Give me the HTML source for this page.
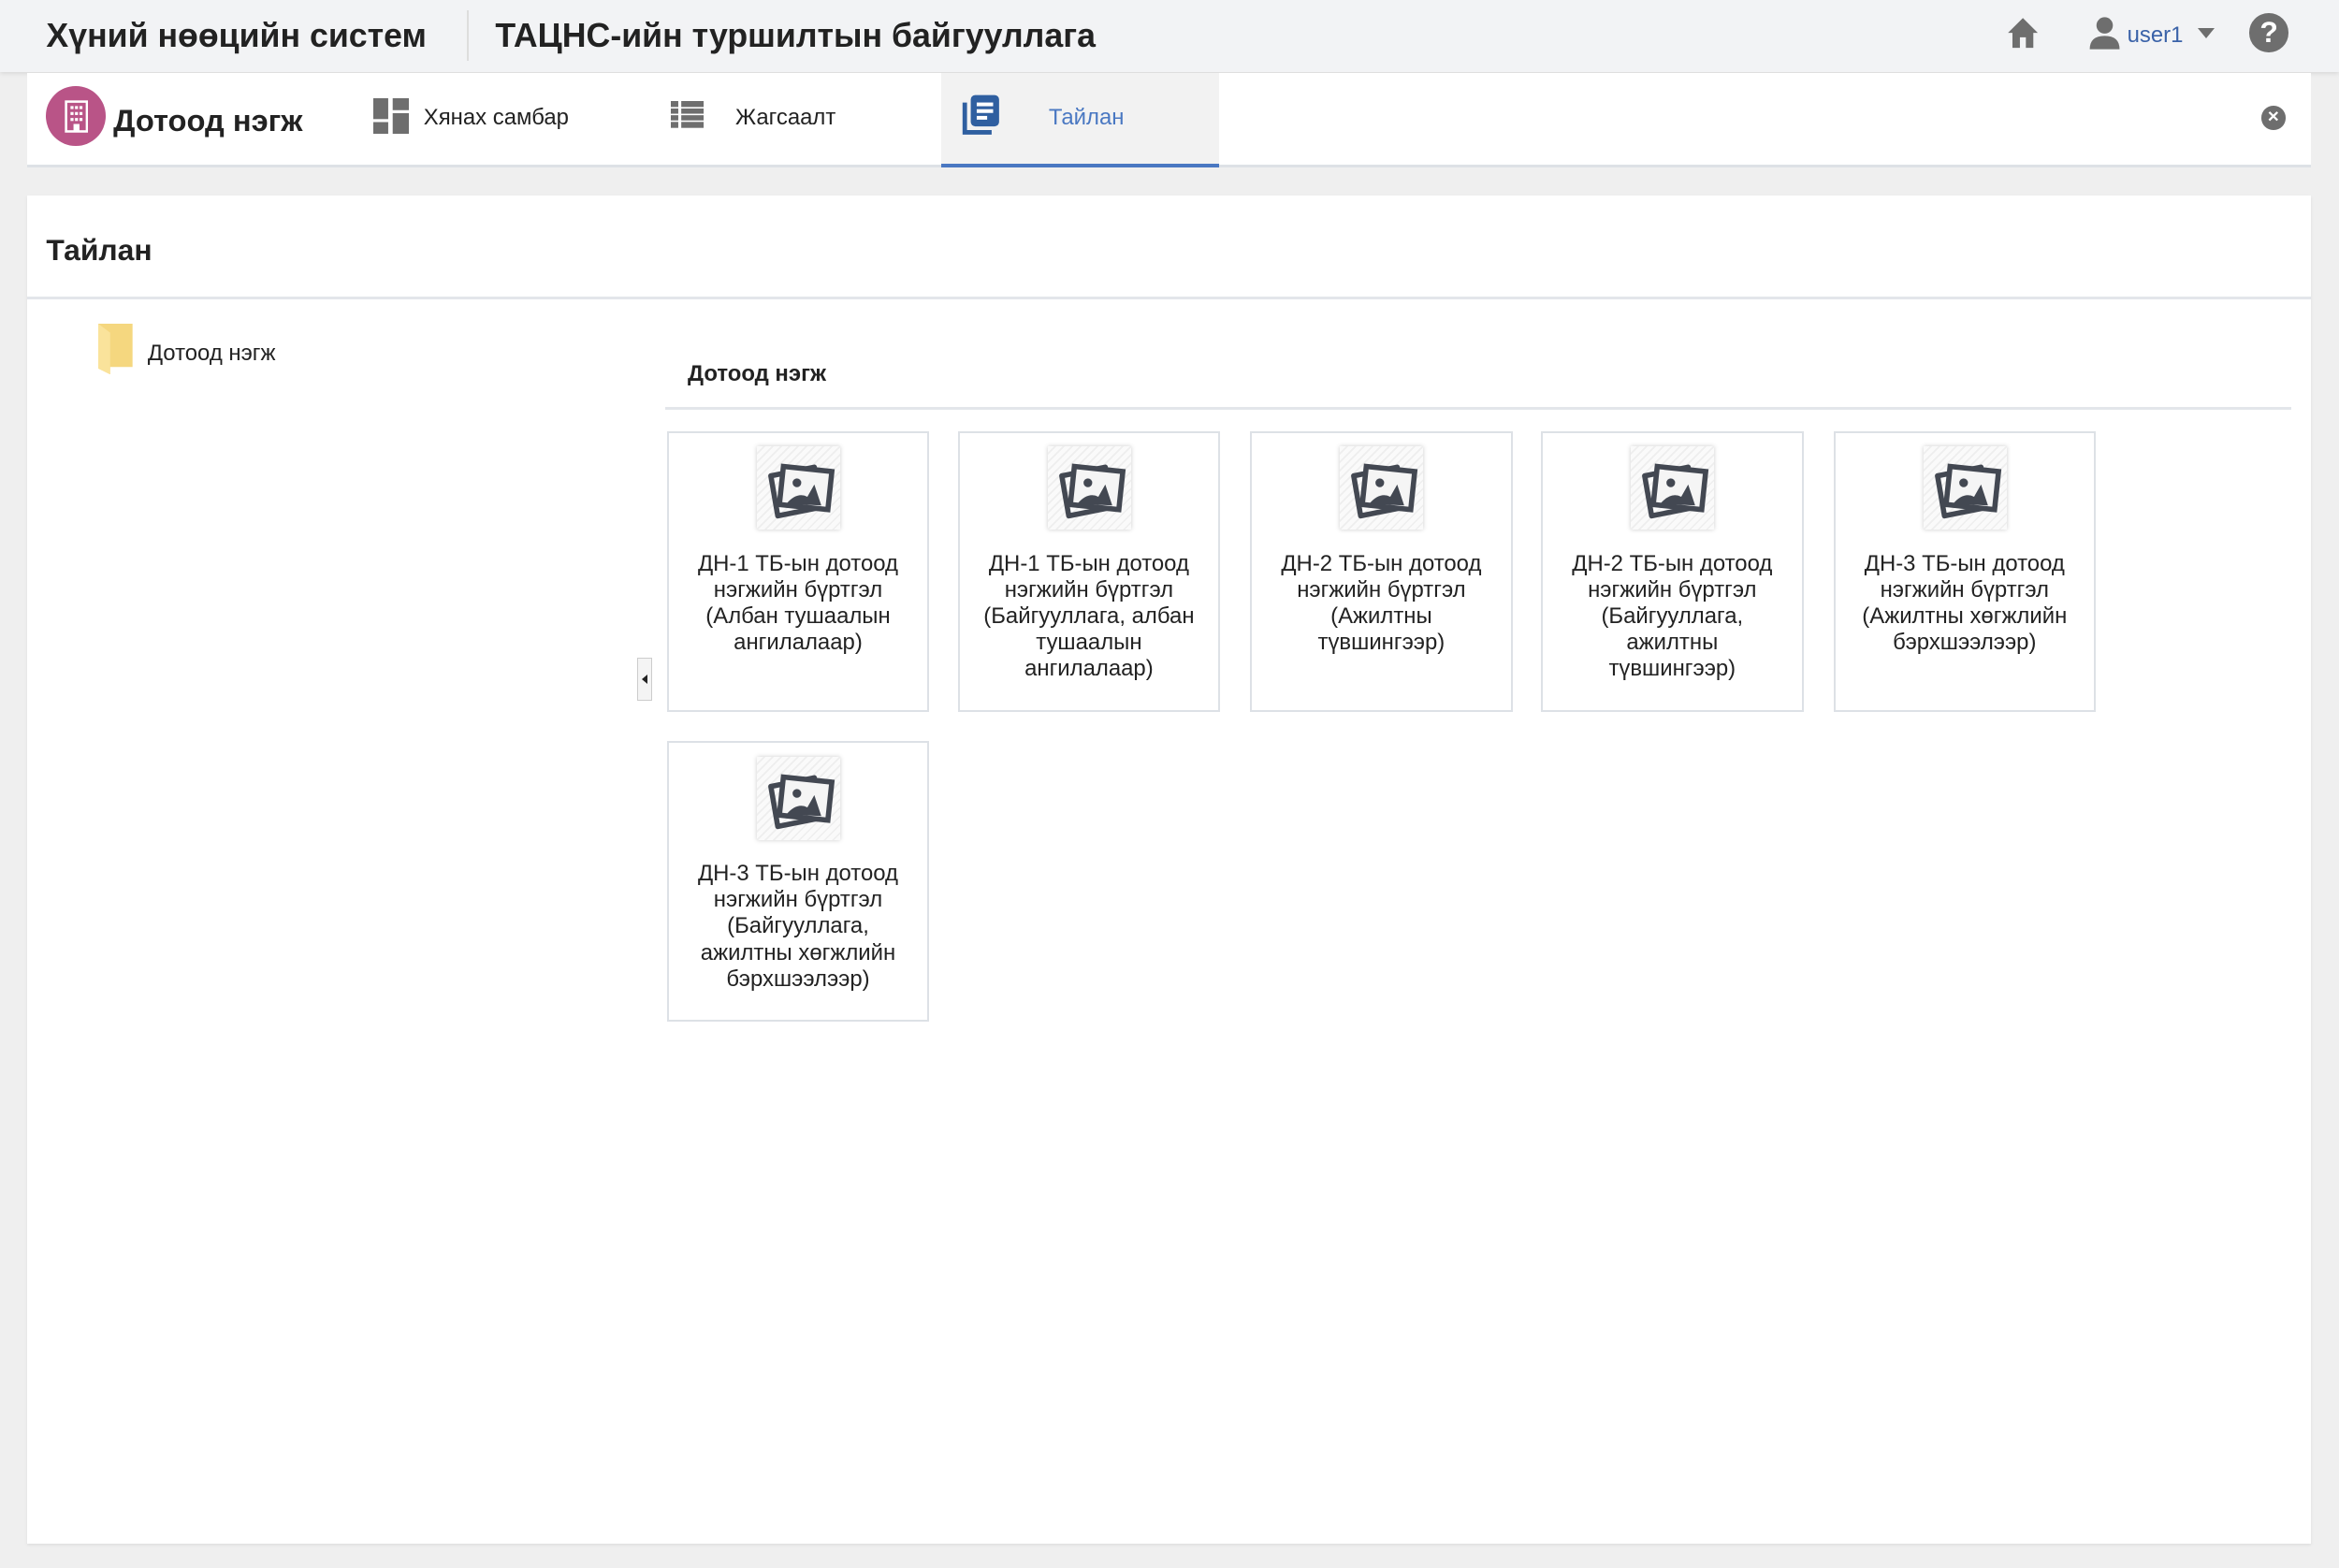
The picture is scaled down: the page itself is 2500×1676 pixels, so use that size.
<!DOCTYPE html>
<html><head><meta charset="utf-8"><style>
*{box-sizing:border-box;margin:0;padding:0}
html,body{width:2500px;height:1676px;overflow:hidden;background:#efefef;font-family:"Liberation Sans",Arial,sans-serif;color:#222}
#w{zoom:1.59439;width:1568px;height:1052px;position:relative}
.a{position:absolute}
.top{left:0;top:0;width:1568px;height:48px;background:#f2f3f5;box-shadow:0 1px 3px rgba(0,0,0,.12)}
.t1{font-weight:bold;font-size:22.4px;top:11px;white-space:nowrap;color:#222}
.tabs{left:18px;top:49px;width:1531px;height:63px;background:#fff;border-bottom:2px solid #dde1e6}
.tab{font-size:15px;top:70px;white-space:nowrap}
.card{width:176px;height:188px;border:1.5px solid #dde1e6;background:#fff;text-align:center;font-size:15px;line-height:17.6px;color:#222;padding:79px 13px 0}
.thumb{position:absolute;left:59px;top:9px;width:56px;height:56px;background:repeating-linear-gradient(135deg,#fafafa 0 3px,#eee 3px 4px);box-shadow:0 0 3px rgba(0,0,0,.2)}
</style></head><body><div id="w">
<div class="a top"></div>
<div class="a t1" style="left:31px">Хүний нөөцийн систем</div>
<div class="a" style="left:313px;top:7px;width:1px;height:34px;background:#ddd"></div>
<div class="a t1" style="left:332px">ТАЦНС-ийн туршилтын байгууллага</div>
<svg class="a" style="left:1344px;top:10px" width="24" height="24" viewBox="0 0 24 24"><path d="M12 2 L2 12 H5 V22 H10 V15 H14 V22 H19 V12 H22 Z" fill="#6e6e6e"/></svg>
<svg class="a" style="left:1400px;top:10px" width="22" height="24" viewBox="0 0 22 24"><circle cx="11" cy="7" r="5.5" fill="#6e6e6e"/><path d="M1 23 Q1 14 11 14 Q21 14 21 23Z" fill="#6e6e6e"/></svg>
<div class="a" style="left:1426px;top:15px;font-size:15px;color:#3a62a8">user1</div>
<div class="a" style="left:1473px;top:19px;width:0;height:0;border-left:6px solid transparent;border-right:6px solid transparent;border-top:7px solid #6e6e6e"></div>
<div class="a" style="left:1508px;top:9px;width:26px;height:26px;border-radius:50%;background:#6e6e6e;color:#fff;font-weight:bold;font-size:20px;text-align:center;line-height:26px">?</div>

<div class="a tabs"></div>
<div class="a" style="left:631px;top:49px;width:186px;height:63px;background:#f2f2f2;border-bottom:3px solid #4a78c2"></div>
<div class="a" style="left:31px;top:58px;width:40px;height:40px;border-radius:50%;background:#b95487"></div>
<svg class="a" style="left:43px;top:67px" width="16" height="22" viewBox="0 0 16 22"><rect x="1" y="1" width="14" height="20" fill="none" stroke="#fff" stroke-width="1.6"/><g fill="#fff"><rect x="4" y="4" width="2" height="2"/><rect x="7" y="4" width="2" height="2"/><rect x="10" y="4" width="2" height="2"/><rect x="4" y="8" width="2" height="2"/><rect x="7" y="8" width="2" height="2"/><rect x="10" y="8" width="2" height="2"/><rect x="4" y="12" width="2" height="2"/><rect x="7" y="12" width="2" height="2"/><rect x="10" y="12" width="2" height="2"/><rect x="6" y="16" width="4" height="5"/></g></svg>
<div class="a" style="left:76px;top:69px;font-size:20.5px;font-weight:bold">Дотоод нэгж</div>
<svg class="a" style="left:250px;top:66px" width="24" height="24" viewBox="0 0 24 24" fill="#6e6e6e"><rect x="0" y="0" width="10" height="14"/><rect x="0" y="16" width="10" height="8"/><rect x="13" y="0" width="11" height="8"/><rect x="13" y="10" width="11" height="14"/></svg>
<div class="a tab" style="left:284px">Хянах самбар</div>
<svg class="a" style="left:450px;top:68px" width="22" height="18" viewBox="0 0 22 18" fill="#6e6e6e"><rect x="0" y="0" width="5" height="4"/><rect x="7" y="0" width="15" height="4"/><rect x="0" y="5" width="5" height="3.5"/><rect x="7" y="5" width="15" height="3.5"/><rect x="0" y="9.5" width="5" height="3.5"/><rect x="7" y="9.5" width="15" height="3.5"/><rect x="0" y="14" width="5" height="4"/><rect x="7" y="14" width="15" height="4"/></svg>
<div class="a tab" style="left:493px">Жагсаалт</div>
<svg class="a" style="left:645px;top:63px" width="26" height="28" viewBox="0 0 26 28"><path d="M2 6 V26 H20" fill="none" stroke="#2f5fa0" stroke-width="3"/><rect x="6" y="1" width="19" height="21" rx="3" fill="#2f5fa0"/><g fill="#fff"><rect x="10" y="6" width="11" height="2.5"/><rect x="10" y="10.5" width="11" height="2.5"/><rect x="10" y="15" width="7" height="2.5"/></g></svg>
<div class="a tab" style="left:703px;color:#4a78c2">Тайлан</div>
<div class="a" style="left:1516px;top:71px;width:16px;height:16px;border-radius:50%;background:#6e6e6e;color:#fff;font-size:13px;font-weight:bold;text-align:center;line-height:15px">×</div>

<div class="a" style="left:18px;top:131px;width:1531px;height:904px;background:#fff;box-shadow:0 1px 2px rgba(0,0,0,.08)"></div>
<div class="a" style="left:31px;top:156px;font-size:20px;font-weight:bold">Тайлан</div>
<div class="a" style="left:18px;top:199px;width:1531px;height:2px;background:#e3e6ea"></div>
<svg class="a" style="left:66px;top:217px" width="24" height="34" viewBox="0 0 24 34"><path d="M0 0 H23 V29 H8 L8 34 L0 30 Z" fill="#f5d77f"/><path d="M0 0 L8 6 V34 L0 30Z" fill="#fae39b"/></svg>
<div class="a" style="left:99px;top:228px;font-size:15px">Дотоод нэгж</div>
<div class="a" style="left:461px;top:242px;font-size:15px;font-weight:bold">Дотоод нэгж</div>
<div class="a" style="left:446px;top:273px;width:1090px;height:2px;background:#e3e6ea"></div>
<div class="a" style="left:427px;top:441px;width:10px;height:29px;border:1px solid #ccc;background:#f4f4f4"></div>
<div class="a" style="left:430px;top:452px;width:0;height:0;border-top:3.5px solid transparent;border-bottom:3.5px solid transparent;border-right:4px solid #222"></div>

<svg width="0" height="0" style="position:absolute"><defs><g id="ph"><path d="M5 14 L30 9 L34 32 L9 37 Z" fill="none" stroke="#434852" stroke-width="3" stroke-linejoin="round"/><rect x="11" y="10" width="28" height="22" fill="#f5f5f5" stroke="#434852" stroke-width="3" transform="rotate(6 25 21)"/><circle cx="20" cy="18" r="2.5" fill="#434852"/><path d="M14 30 Q20 23 26 26 L30 19 L34 31 Z" fill="#434852"/></g></defs></svg>

<div class="a card" style="left:447px;top:289px"><div class="thumb"><svg width="56" height="56" viewBox="-3 -3 48 48"><use href="#ph"/></svg></div>ДН-1 ТБ-ын дотоод нэгжийн бүртгэл (Албан тушаалын ангилалаар)</div>
<div class="a card" style="left:642px;top:289px"><div class="thumb"><svg width="56" height="56" viewBox="-3 -3 48 48"><use href="#ph"/></svg></div>ДН-1 ТБ-ын дотоод нэгжийн бүртгэл (Байгууллага, албан тушаалын ангилалаар)</div>
<div class="a card" style="left:838px;top:289px"><div class="thumb"><svg width="56" height="56" viewBox="-3 -3 48 48"><use href="#ph"/></svg></div>ДН-2 ТБ-ын дотоод нэгжийн бүртгэл (Ажилтны түвшингээр)</div>
<div class="a card" style="left:1033px;top:289px"><div class="thumb"><svg width="56" height="56" viewBox="-3 -3 48 48"><use href="#ph"/></svg></div>ДН-2 ТБ-ын дотоод нэгжийн бүртгэл (Байгууллага, ажилтны түвшингээр)</div>
<div class="a card" style="left:1229px;top:289px"><div class="thumb"><svg width="56" height="56" viewBox="-3 -3 48 48"><use href="#ph"/></svg></div>ДН-3 ТБ-ын дотоод нэгжийн бүртгэл (Ажилтны хөгжлийн бэрхшээлээр)</div>
<div class="a card" style="left:447px;top:497px"><div class="thumb"><svg width="56" height="56" viewBox="-3 -3 48 48"><use href="#ph"/></svg></div>ДН-3 ТБ-ын дотоод нэгжийн бүртгэл (Байгууллага, ажилтны хөгжлийн бэрхшээлээр)</div>
</div></body></html>
